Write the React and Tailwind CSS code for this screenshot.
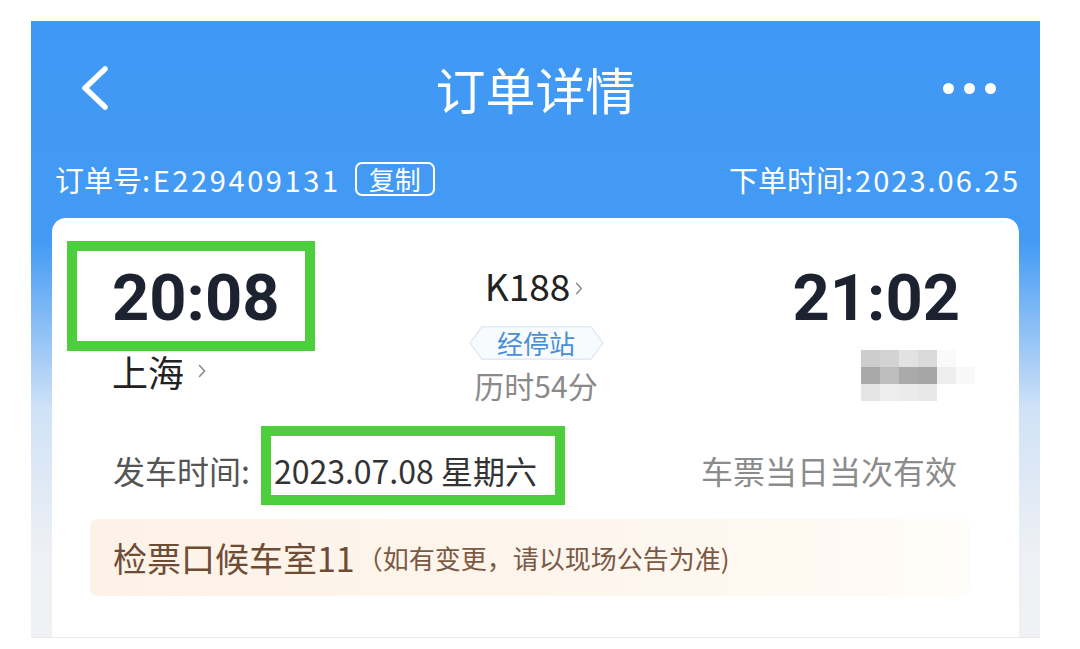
import React from "react";

const cjk = { fontFamily: '"Noto Sans CJK SC", "Noto Sans", sans-serif' };
const num = { fontFamily: 'Roboto, "Noto Sans CJK SC", sans-serif' };

function Chevron({ className }) {
  return (
    <svg viewBox="0 0 8 14" className={className} fill="none" stroke="currentColor" strokeWidth="1.6" strokeLinecap="round" strokeLinejoin="round">
      <polyline points="1.5,1.5 6.5,7 1.5,12.5" />
    </svg>
  );
}

function StopTag() {
  return (
    <div className="relative w-[135px] h-[34px] flex items-center justify-center">
      <svg viewBox="0 0 135 34" className="absolute inset-0 w-full h-full">
        <polygon points="13,0.75 122,0.75 134,17 122,33.25 13,33.25 1,17" fill="#f8fbfe" stroke="#e2eaf4" strokeWidth="1.5" />
      </svg>
      <span className="relative text-[26px] leading-none text-[#4a8fd6]" style={cjk}>经停站</span>
    </div>
  );
}

function Mosaic() {
  const rows = [
    ["#cdcdcd", "#d3d3d3", "#e2e2e2", "#dadada", "#fafafa", "#ffffff"],
    ["#a9a9a9", "#bdbdbd", "#aaaaaa", "#a6a6a6", "#eeeeee", "#f8f8f8"],
    ["#e5e5e5", "#ededed", "#ebebeb", "#e8e8e8", "#ffffff", "#ffffff"],
  ];
  return (
    <div className="mt-[19px] mr-[-15px] flex flex-col blur-[0.6px]">
      {rows.map((r, i) => (
        <div key={i} className="flex">
          {r.map((c, j) => (
            <div key={j} className="w-[19px] h-[17px]" style={{ backgroundColor: c }} />
          ))}
        </div>
      ))}
    </div>
  );
}

export default function App() {
  return (
    <div className="w-[1080px] h-[649px] bg-white overflow-hidden pt-[21px] pl-[31px]">
      <div className="w-[1009px] h-[617px] flex flex-col pt-[22px] border-b border-[#e8eaee] bg-[linear-gradient(to_bottom,#3f98f4_0%,#449bf4_36%,#d0e2f7_63%,#edf0f4_86%,#eff1f4_100%)]">
        {/* header */}
        <div className="h-[90px] flex items-center justify-between pl-[49px] pr-[44px] relative">
          <svg viewBox="0 0 30 46" className="w-[30px] h-[46px]" fill="none" stroke="white" strokeWidth="5.5" strokeLinecap="round" strokeLinejoin="round">
            <polyline points="25,4 5,23 25,42" />
          </svg>
          <div className="absolute left-0 right-0 text-center text-white text-[50px] leading-none pointer-events-none" style={cjk}>
            订单详情
          </div>
          <div className="flex gap-[10px]">
            <span className="w-[11px] h-[11px] rounded-full bg-white" />
            <span className="w-[11px] h-[11px] rounded-full bg-white" />
            <span className="w-[11px] h-[11px] rounded-full bg-white" />
          </div>
        </div>

        {/* order row */}
        <div className="mt-[26px] h-[40px] flex items-center justify-between pl-[24px] pr-[22px] text-white whitespace-nowrap" style={cjk}>
          <div className="flex items-center shrink-0">
            <span className="text-[29px] leading-none">
              订单号<span className="tracking-[2.6px]">:E229409131</span>
            </span>
            <span className="ml-[14px] h-[34px] px-[12px] flex items-center border-2 border-white rounded-[7px] text-[26px] leading-none">复制</span>
          </div>
          <span className="shrink-0 text-[29px] leading-none">
            下单时间<span className="tracking-[2px] mr-[-2px]">:2023.06.25</span>
          </span>
        </div>

        {/* card */}
        <div className="mt-[19px] mx-[21px] flex-1 bg-white rounded-t-[14px] relative">
          <div className="grid grid-cols-[1fr_auto_1fr] pl-[60px] pr-[59px] pt-[48px]">
            <div className="flex flex-col items-start">
              <div className="text-[65px] leading-none font-bold text-[#1d2231]" style={num}>20:08</div>
              <div className="mt-[22px] h-[36px] flex items-center">
                <span className="text-[36px] leading-none text-[#222]" style={cjk}>上海</span>
                <Chevron className="ml-[14px] w-[8px] h-[14px] text-[#8a8a8a]" />
              </div>
            </div>

            <div className="flex flex-col items-center">
              <div className="h-[39px] flex items-center pr-[4px]">
                <span className="text-[37px] leading-none text-[#222]" style={cjk}>K188</span>
                <Chevron className="ml-[5px] mt-[6px] w-[8px] h-[13px] text-[#8a8a8a]" />
              </div>
              <div className="mt-[21px]">
                <StopTag />
              </div>
              <div className="mt-[10px] text-[30px] leading-none text-[#8a8a8a]" style={cjk}>历时54分</div>
            </div>

            <div className="flex flex-col items-end">
              <div className="text-[65px] leading-none font-bold text-[#1d2231]" style={num}>21:02</div>
              <Mosaic />
            </div>
          </div>

          {/* departure row */}
          <div className="mt-[49px] h-[40px] flex items-center justify-between pl-[61px] pr-[62px] whitespace-nowrap" style={cjk}>
            <div className="flex items-center text-[32px] leading-none">
              <span className="text-[#555]">发车时间:</span>
              <span className="ml-[24px] text-[#333]">2023.07.08 星期六</span>
            </div>
            <span className="text-[32px] leading-none text-[#8c8c8c]">车票当日当次有效</span>
          </div>

          {/* notice band */}
          <div className="mt-[29px] ml-[38px] mr-[49px] h-[77px] flex items-center pl-[23px] rounded-[8px] whitespace-nowrap bg-[linear-gradient(to_right,#fdf2e7_0%,#fdf5ec_50%,#fffaf4_90%,#fffdfa_100%)]" style={cjk}>
            <span className="text-[34px] leading-none text-[#6f4c36]">检票口候车室11</span>
            <span className="ml-[2px] text-[26px] leading-none text-[#7a5a45]">（如有变更，请以现场公告为准)</span>
          </div>

          {/* annotation boxes */}
          <div className="absolute left-[15px] top-[23px] w-[248px] h-[110px] border-[10px] border-[#4dcf3d]" />
          <div className="absolute left-[209px] top-[208px] w-[304px] h-[79px] border-[10px] border-[#4dcf3d]" />
        </div>
      </div>
    </div>
  );
}
